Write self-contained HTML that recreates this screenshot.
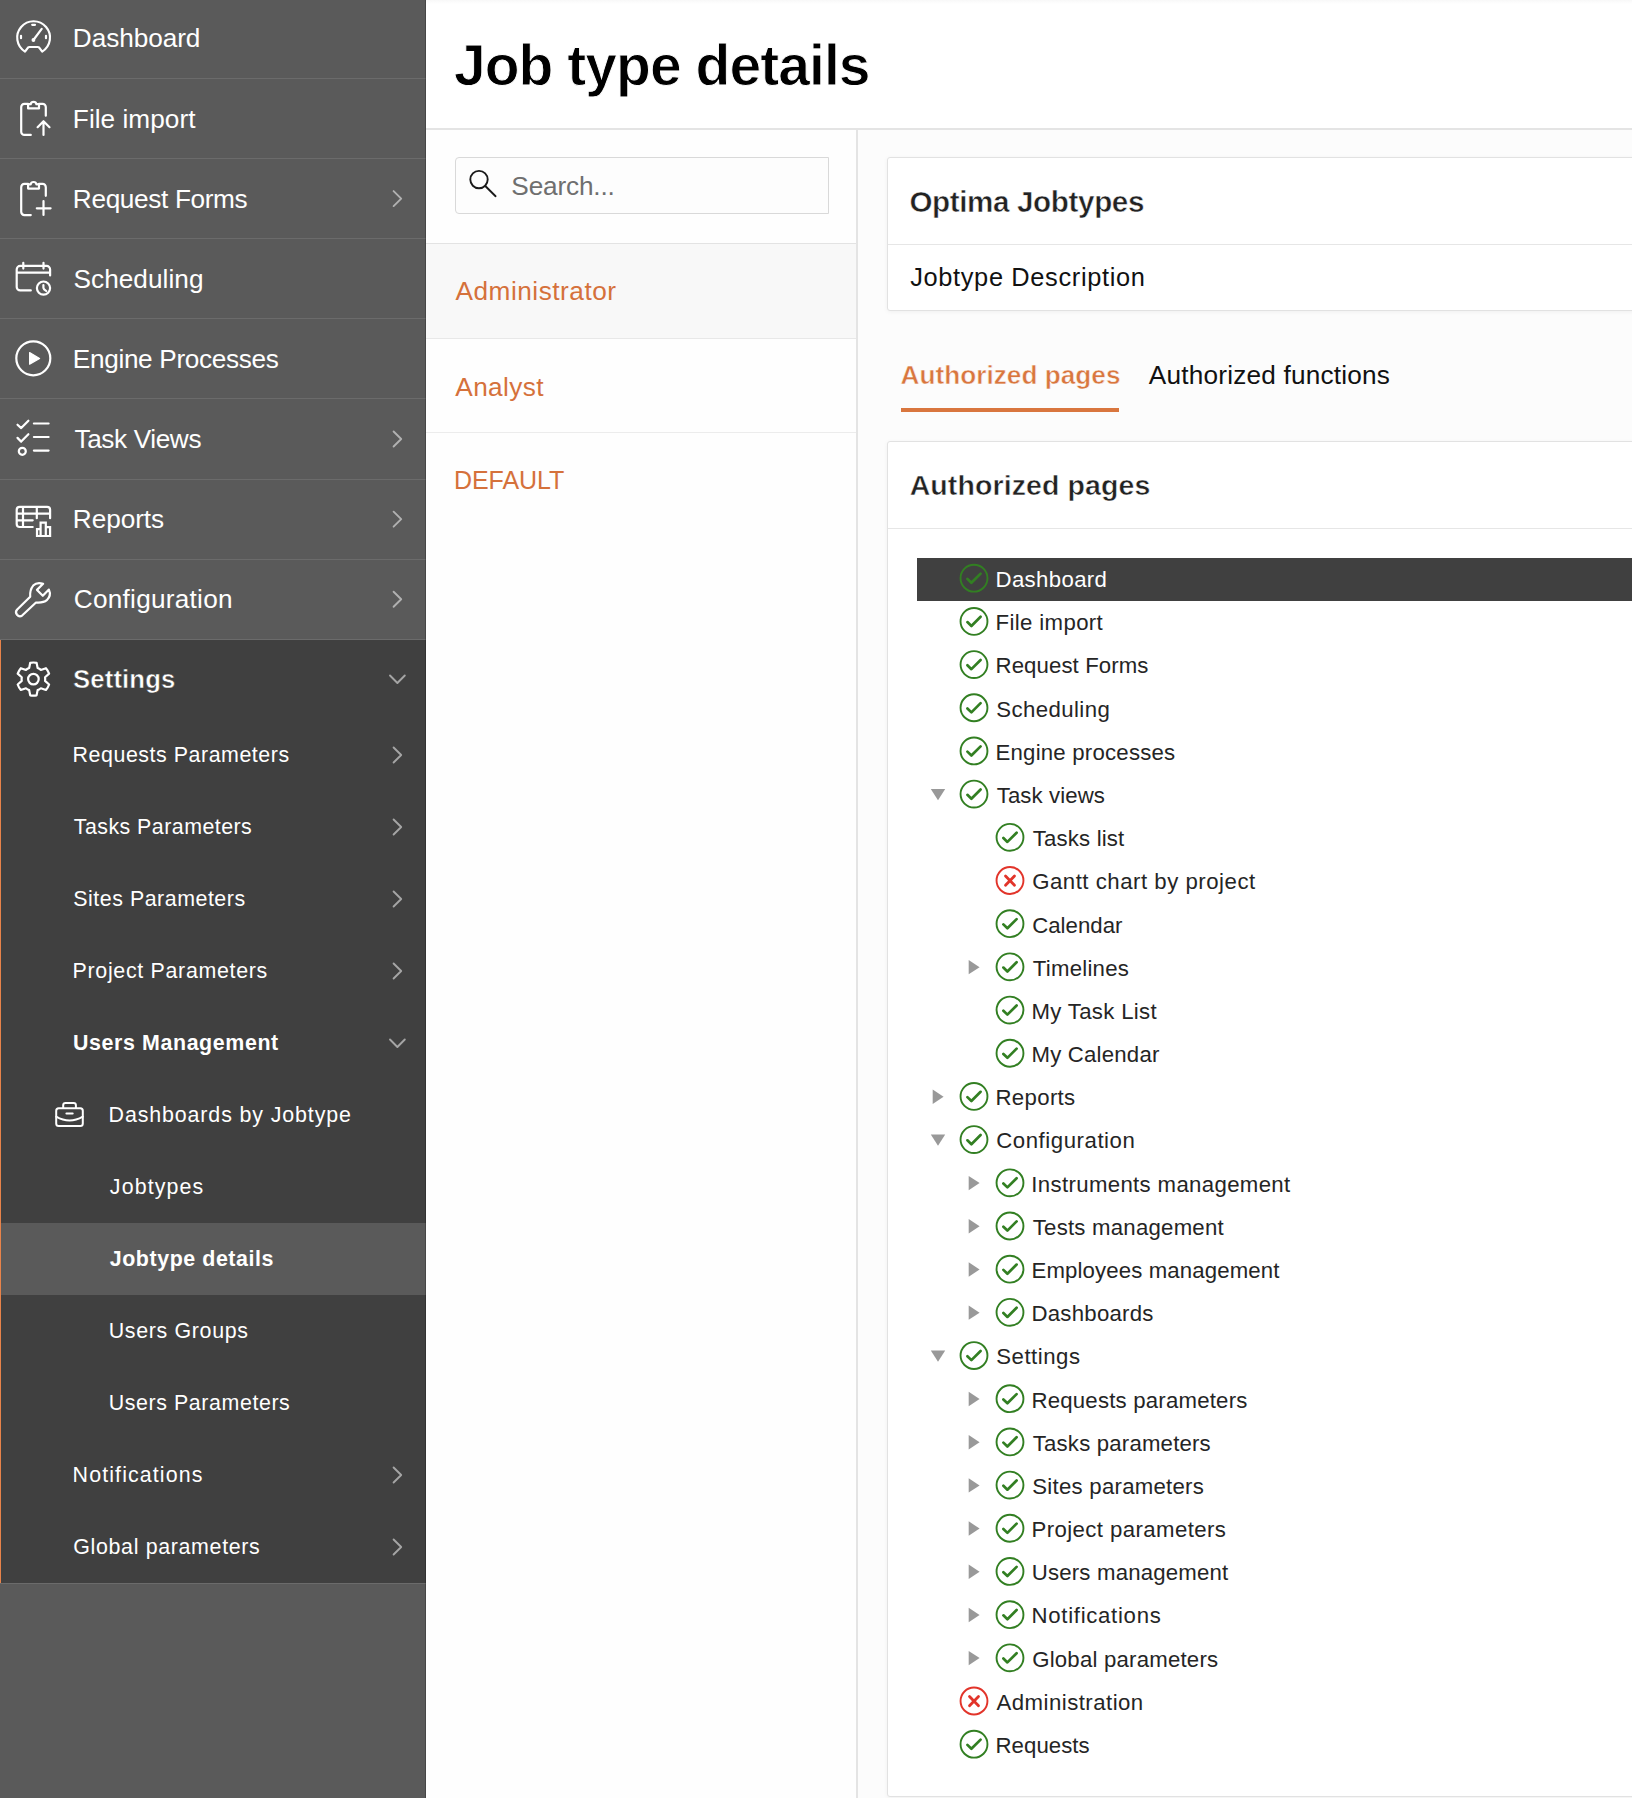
<!DOCTYPE html>
<html><head><meta charset="utf-8"><style>
html,body{margin:0;padding:0}
body{width:1632px;height:1798px;overflow:hidden;position:relative;background:#fcfcfc;font-family:"Liberation Sans",sans-serif}
.abs{position:absolute;box-sizing:border-box}
.t{position:absolute;white-space:nowrap}
</style></head><body>
<div class="abs" style="left:0;top:0;width:426px;height:1798px;background:#5a5a5a"></div>
<div class="abs" style="left:0;top:78px;width:426px;height:1px;background:#6b6b6b"></div>
<div class="abs" style="left:0;top:158px;width:426px;height:1px;background:#6b6b6b"></div>
<div class="abs" style="left:0;top:238px;width:426px;height:1px;background:#6b6b6b"></div>
<div class="abs" style="left:0;top:318px;width:426px;height:1px;background:#6b6b6b"></div>
<div class="abs" style="left:0;top:398px;width:426px;height:1px;background:#6b6b6b"></div>
<div class="abs" style="left:0;top:479px;width:426px;height:1px;background:#6b6b6b"></div>
<div class="abs" style="left:0;top:559px;width:426px;height:1px;background:#6b6b6b"></div>
<div class="abs" style="left:0;top:639px;width:426px;height:1px;background:#6b6b6b"></div>
<div class="abs" style="left:0;top:640px;width:426px;height:943px;background:#404040"></div>
<div class="abs" style="left:0;top:1223px;width:426px;height:72px;background:#5a5a5a"></div>
<div class="abs" style="left:0;top:640px;width:1.3px;height:943px;background:#e8834a"></div>
<div class="abs" style="left:0;top:1583px;width:426px;height:1px;background:#6b6b6b"></div>
<div class="abs" style="left:425px;top:0;width:1px;height:1798px;background:rgba(0,0,0,0.22)"></div>
<svg class="abs" style="left:0;top:0" width="426" height="1798" viewBox="0 0 426 1798"><g fill="none" stroke="#fff" stroke-width="2.2" stroke-linecap="round" stroke-linejoin="round"><path d="M25,51.6 A16.4,16.4 0 1 1 42.2,51.6 L39.2,47.6 Q38.6,47 37.8,47 H29.4 Q28.6,47 28,47.6 Z" /><path d="M32.2,24.8 H35 M21,35.8 V38.2 M46,35.8 V38.2 M33.4,40 L41.7,28.9" /><circle cx="33.4" cy="40" r="1.9" fill="#fff" stroke="none"/><path d="M30.8,134.9 H24.4 A3.2,3.2 0 0 1 21.2,131.7 V107 A3.2,3.2 0 0 1 24.4,103.8 H28.1" /><path d="M39,103.8 H42.6 A3.2,3.2 0 0 1 45.8,107 V115.7" /><path d="M28.1,108.4 H39 V104.2 H36.4 A2.9,2.9 0 0 0 30.7,104.2 H28.1 Z" /><path d="M43.5,135 V121.3 M37.6,127.2 L43.5,121.2 L49.5,127.2" /><path d="M30.8,215.04000000000002 H24.4 A3.2,3.2 0 0 1 21.2,211.83999999999997 V187.14 A3.2,3.2 0 0 1 24.4,183.94 H28.1" /><path d="M39,183.94 H42.6 A3.2,3.2 0 0 1 45.8,187.14 V195.84" /><path d="M28.1,188.54000000000002 H39 V184.34 H36.4 A2.9,2.9 0 0 0 30.7,184.34 H28.1 Z" /><path d="M43.5,201 V215 M36.8,208.3 H50.6" /><path d="M30.8,290.4 H20.2 A3.5,3.5 0 0 1 16.7,286.9 V269.4 A3.5,3.5 0 0 1 20.2,265.9 H46.6 A3.5,3.5 0 0 1 50.1,269.4 V275.4 M16.7,272.7 H50.1 M23.3,262.8 V268.6 M43.5,262.8 V268.6" /><circle cx="43.5" cy="288.1" r="6.6"/><path d="M43.4,285 V287.6 Q43.4,288.6 44.2,289.4 L46.2,291" /><circle cx="33.3" cy="358.3" r="17"/><path d="M29.6,352.6 L39.6,358.4 L29.6,364.2 Z" fill="#fff" stroke-width="1.2"/><path d="M17.5,424.7 L21.2,428.1 L28.4,420.7 M17.5,437.9 L21.2,441.6 L28.4,434.2 M33.9,423.5 H48.6 M33.9,437 H48.6 M33.9,450.6 H48.6" /><circle cx="22.3" cy="451.3" r="3.5"/><path d="M32.7,527 H19.7 A3,3 0 0 1 16.7,524 V509.9 A3,3 0 0 1 19.7,506.9 H47.1 A3,3 0 0 1 50.1,509.9 V518.2 M16.7,513.6 H50.1 M16.7,520.3 H32.7 M23,506.9 V527 M36.8,506.9 V518.2" /><path d="M37,536 V529.2 H40.6 V522.6 H45.8 V527.1 H50.1 V536 Z M40.6,529.2 V536 M45.8,527.1 V536" stroke-linecap="butt" stroke-linejoin="miter"/><path d="M30.2,596.7 Q29.6,590 33.2,585.6 Q37,581.6 43.1,583.8 L37,589.9 L42.8,595.8 L48.9,589.6 Q51.6,595.6 46.8,600.2 Q43.6,603 36,602.5 L22.4,615.3 Q19.4,617.6 17,614.8 Q14.8,612 17.2,609.5 Z" /><path d="M45.05,677.25 L49.10,673.70 A16.60,16.60 0 0 0 45.93,668.21 L40.83,669.93 A11.80,11.80 0 0 0 37.63,668.08 L36.57,662.80 A16.60,16.60 0 0 0 30.23,662.80 L29.17,668.08 A11.80,11.80 0 0 0 25.97,669.93 L20.87,668.21 A16.60,16.60 0 0 0 17.70,673.70 L21.75,677.25 A11.80,11.80 0 0 0 21.75,680.95 L17.70,684.50 A16.60,16.60 0 0 0 20.87,689.99 L25.97,688.27 A11.80,11.80 0 0 0 29.17,690.12 L30.23,695.40 A16.60,16.60 0 0 0 36.57,695.40 L37.63,690.12 A11.80,11.80 0 0 0 40.83,688.27 L45.93,689.99 A16.60,16.60 0 0 0 49.10,684.50 L45.05,680.95 A11.80,11.80 0 0 0 45.05,677.25 Z" /><circle cx="33.4" cy="679.1" r="5.3"/><path d="M58.7,1108.2 H80.3 A2.5,2.5 0 0 1 82.8,1110.7 V1123.5 A2.5,2.5 0 0 1 80.3,1126 H58.7 A2.5,2.5 0 0 1 56.2,1123.5 V1110.7 A2.5,2.5 0 0 1 58.7,1108.2 Z" stroke-width="2"/><path d="M63.2,1108 V1105 A2.2,2.2 0 0 1 65.4,1102.9 H73.7 A2.2,2.2 0 0 1 75.9,1105 V1108 M56.2,1116.7 Q69.5,1124.5 82.8,1116.7 M66.4,1113.4 H72.7" stroke-width="2"/><path d="M393.6,191.08 L401.2,198.58 L393.6,206.08" stroke="rgba(255,255,255,0.53)" stroke-width="1.9"/><path d="M393.6,431.50 L401.2,439.00 L393.6,446.50" stroke="rgba(255,255,255,0.53)" stroke-width="1.9"/><path d="M393.6,511.64 L401.2,519.14 L393.6,526.64" stroke="rgba(255,255,255,0.53)" stroke-width="1.9"/><path d="M393.6,591.78 L401.2,599.28 L393.6,606.78" stroke="rgba(255,255,255,0.53)" stroke-width="1.9"/><path d="M393.6,747.50 L401.2,755.00 L393.6,762.50" stroke="rgba(255,255,255,0.53)" stroke-width="1.9"/><path d="M393.6,819.50 L401.2,827.00 L393.6,834.50" stroke="rgba(255,255,255,0.53)" stroke-width="1.9"/><path d="M393.6,891.50 L401.2,899.00 L393.6,906.50" stroke="rgba(255,255,255,0.53)" stroke-width="1.9"/><path d="M393.6,963.50 L401.2,971.00 L393.6,978.50" stroke="rgba(255,255,255,0.53)" stroke-width="1.9"/><path d="M393.6,1467.50 L401.2,1475.00 L393.6,1482.50" stroke="rgba(255,255,255,0.53)" stroke-width="1.9"/><path d="M393.6,1539.50 L401.2,1547.00 L393.6,1554.50" stroke="rgba(255,255,255,0.53)" stroke-width="1.9"/><path d="M390,675.50 L397.4,683.00 L404.8,675.50" stroke="rgba(255,255,255,0.53)" stroke-width="1.9"/><path d="M390,1039.50 L397.4,1047.00 L404.8,1039.50" stroke="rgba(255,255,255,0.53)" stroke-width="1.9"/></g></svg>
<div class="abs" style="left:426px;top:0;width:1206px;height:128px;background:#fff"></div>
<div class="abs" style="left:426px;top:0;width:1206px;height:4px;background:linear-gradient(#f8f8f8,#fff)"></div>
<div class="abs" style="left:426px;top:128px;width:1206px;height:2px;background:#e4e4e4"></div>
<div class="abs" style="left:426px;top:130px;width:430px;height:1668px;background:#fefefe"></div>
<div class="abs" style="left:856px;top:128px;width:2px;height:1670px;background:#e4e4e4"></div>
<div class="abs" style="left:455px;top:157px;width:374px;height:56.5px;border:1px solid #d9d9d9;border-radius:4px 0 0 4px;background:#fdfdfd"></div>
<div class="abs" style="left:426px;top:243px;width:430px;height:1px;background:#e3e3e3"></div>
<div class="abs" style="left:426px;top:244px;width:430px;height:94px;background:#f8f8f8"></div>
<div class="abs" style="left:426px;top:338px;width:430px;height:1px;background:#e8e8e8"></div>
<div class="abs" style="left:426px;top:432px;width:430px;height:1px;background:#ececec"></div>
<div class="abs" style="left:858px;top:130px;width:774px;height:1668px;background:#fcfcfc"></div>
<div class="abs" style="left:887px;top:157px;width:760px;height:154px;border:1px solid #e2e2e2;border-radius:3px;background:#fff;box-shadow:0 1px 4px rgba(0,0,0,0.05)"></div>
<div class="abs" style="left:888px;top:244px;width:744px;height:1px;background:#e6e6e6"></div>
<div class="abs" style="left:901px;top:408px;width:218px;height:4px;background:#d9763e"></div>
<div class="abs" style="left:887px;top:441px;width:760px;height:1356px;border:1px solid #e2e2e2;border-radius:3px;background:#fff;box-shadow:0 1px 4px rgba(0,0,0,0.05)"></div>
<div class="abs" style="left:888px;top:528px;width:744px;height:1px;background:#e6e6e6"></div>
<div class="abs" style="left:917px;top:558px;width:715px;height:43px;background:#404040"></div>
<svg class="abs" style="left:0;top:0" width="1632" height="1798" viewBox="0 0 1632 1798"><g><circle cx="974.00" cy="578.20" r="13.45" fill="none" stroke="#327f22" stroke-width="1.9"/><path d="M967.40,578.90 L971.40,582.80 L980.60,573.60" fill="none" stroke="#327f22" stroke-width="2.7" stroke-linecap="round" stroke-linejoin="round"/><circle cx="974.00" cy="621.38" r="13.45" fill="none" stroke="#327f22" stroke-width="1.9"/><path d="M967.40,622.08 L971.40,625.98 L980.60,616.78" fill="none" stroke="#327f22" stroke-width="2.7" stroke-linecap="round" stroke-linejoin="round"/><circle cx="974.00" cy="664.57" r="13.45" fill="none" stroke="#327f22" stroke-width="1.9"/><path d="M967.40,665.27 L971.40,669.17 L980.60,659.97" fill="none" stroke="#327f22" stroke-width="2.7" stroke-linecap="round" stroke-linejoin="round"/><circle cx="974.00" cy="707.76" r="13.45" fill="none" stroke="#327f22" stroke-width="1.9"/><path d="M967.40,708.46 L971.40,712.36 L980.60,703.16" fill="none" stroke="#327f22" stroke-width="2.7" stroke-linecap="round" stroke-linejoin="round"/><circle cx="974.00" cy="750.94" r="13.45" fill="none" stroke="#327f22" stroke-width="1.9"/><path d="M967.40,751.64 L971.40,755.54 L980.60,746.34" fill="none" stroke="#327f22" stroke-width="2.7" stroke-linecap="round" stroke-linejoin="round"/><circle cx="974.00" cy="794.12" r="13.45" fill="none" stroke="#327f22" stroke-width="1.9"/><path d="M967.40,794.82 L971.40,798.72 L980.60,789.52" fill="none" stroke="#327f22" stroke-width="2.7" stroke-linecap="round" stroke-linejoin="round"/><path d="M930.80,789.02 L945.20,789.02 L938.00,800.22 Z" fill="#999"/><circle cx="1010.00" cy="837.31" r="13.45" fill="none" stroke="#327f22" stroke-width="1.9"/><path d="M1003.40,838.01 L1007.40,841.91 L1016.60,832.71" fill="none" stroke="#327f22" stroke-width="2.7" stroke-linecap="round" stroke-linejoin="round"/><circle cx="1010.00" cy="880.50" r="13.45" fill="none" stroke="#e2342a" stroke-width="1.9"/><path d="M1005.50,876.00 L1014.50,885.20 M1014.50,876.00 L1005.50,885.20" fill="none" stroke="#e2342a" stroke-width="2.8" stroke-linecap="round"/><circle cx="1010.00" cy="923.68" r="13.45" fill="none" stroke="#327f22" stroke-width="1.9"/><path d="M1003.40,924.38 L1007.40,928.28 L1016.60,919.08" fill="none" stroke="#327f22" stroke-width="2.7" stroke-linecap="round" stroke-linejoin="round"/><circle cx="1010.00" cy="966.87" r="13.45" fill="none" stroke="#327f22" stroke-width="1.9"/><path d="M1003.40,967.56 L1007.40,971.46 L1016.60,962.26" fill="none" stroke="#327f22" stroke-width="2.7" stroke-linecap="round" stroke-linejoin="round"/><path d="M968.70,959.96 L979.60,967.16 L968.70,974.37 Z" fill="#999"/><circle cx="1010.00" cy="1010.05" r="13.45" fill="none" stroke="#327f22" stroke-width="1.9"/><path d="M1003.40,1010.75 L1007.40,1014.65 L1016.60,1005.45" fill="none" stroke="#327f22" stroke-width="2.7" stroke-linecap="round" stroke-linejoin="round"/><circle cx="1010.00" cy="1053.24" r="13.45" fill="none" stroke="#327f22" stroke-width="1.9"/><path d="M1003.40,1053.94 L1007.40,1057.84 L1016.60,1048.63" fill="none" stroke="#327f22" stroke-width="2.7" stroke-linecap="round" stroke-linejoin="round"/><circle cx="974.00" cy="1096.42" r="13.45" fill="none" stroke="#327f22" stroke-width="1.9"/><path d="M967.40,1097.12 L971.40,1101.02 L980.60,1091.82" fill="none" stroke="#327f22" stroke-width="2.7" stroke-linecap="round" stroke-linejoin="round"/><path d="M932.70,1089.52 L943.60,1096.72 L932.70,1103.92 Z" fill="#999"/><circle cx="974.00" cy="1139.61" r="13.45" fill="none" stroke="#327f22" stroke-width="1.9"/><path d="M967.40,1140.31 L971.40,1144.20 L980.60,1135.00" fill="none" stroke="#327f22" stroke-width="2.7" stroke-linecap="round" stroke-linejoin="round"/><path d="M930.80,1134.50 L945.20,1134.50 L938.00,1145.70 Z" fill="#999"/><circle cx="1010.00" cy="1182.79" r="13.45" fill="none" stroke="#327f22" stroke-width="1.9"/><path d="M1003.40,1183.49 L1007.40,1187.39 L1016.60,1178.19" fill="none" stroke="#327f22" stroke-width="2.7" stroke-linecap="round" stroke-linejoin="round"/><path d="M968.70,1175.89 L979.60,1183.09 L968.70,1190.29 Z" fill="#999"/><circle cx="1010.00" cy="1225.98" r="13.45" fill="none" stroke="#327f22" stroke-width="1.9"/><path d="M1003.40,1226.68 L1007.40,1230.58 L1016.60,1221.38" fill="none" stroke="#327f22" stroke-width="2.7" stroke-linecap="round" stroke-linejoin="round"/><path d="M968.70,1219.08 L979.60,1226.28 L968.70,1233.48 Z" fill="#999"/><circle cx="1010.00" cy="1269.16" r="13.45" fill="none" stroke="#327f22" stroke-width="1.9"/><path d="M1003.40,1269.86 L1007.40,1273.76 L1016.60,1264.56" fill="none" stroke="#327f22" stroke-width="2.7" stroke-linecap="round" stroke-linejoin="round"/><path d="M968.70,1262.26 L979.60,1269.46 L968.70,1276.66 Z" fill="#999"/><circle cx="1010.00" cy="1312.35" r="13.45" fill="none" stroke="#327f22" stroke-width="1.9"/><path d="M1003.40,1313.05 L1007.40,1316.94 L1016.60,1307.74" fill="none" stroke="#327f22" stroke-width="2.7" stroke-linecap="round" stroke-linejoin="round"/><path d="M968.70,1305.44 L979.60,1312.64 L968.70,1319.85 Z" fill="#999"/><circle cx="974.00" cy="1355.53" r="13.45" fill="none" stroke="#327f22" stroke-width="1.9"/><path d="M967.40,1356.23 L971.40,1360.13 L980.60,1350.93" fill="none" stroke="#327f22" stroke-width="2.7" stroke-linecap="round" stroke-linejoin="round"/><path d="M930.80,1350.43 L945.20,1350.43 L938.00,1361.63 Z" fill="#999"/><circle cx="1010.00" cy="1398.72" r="13.45" fill="none" stroke="#327f22" stroke-width="1.9"/><path d="M1003.40,1399.42 L1007.40,1403.32 L1016.60,1394.12" fill="none" stroke="#327f22" stroke-width="2.7" stroke-linecap="round" stroke-linejoin="round"/><path d="M968.70,1391.82 L979.60,1399.02 L968.70,1406.22 Z" fill="#999"/><circle cx="1010.00" cy="1441.90" r="13.45" fill="none" stroke="#327f22" stroke-width="1.9"/><path d="M1003.40,1442.60 L1007.40,1446.50 L1016.60,1437.30" fill="none" stroke="#327f22" stroke-width="2.7" stroke-linecap="round" stroke-linejoin="round"/><path d="M968.70,1435.00 L979.60,1442.20 L968.70,1449.40 Z" fill="#999"/><circle cx="1010.00" cy="1485.09" r="13.45" fill="none" stroke="#327f22" stroke-width="1.9"/><path d="M1003.40,1485.79 L1007.40,1489.68 L1016.60,1480.48" fill="none" stroke="#327f22" stroke-width="2.7" stroke-linecap="round" stroke-linejoin="round"/><path d="M968.70,1478.18 L979.60,1485.38 L968.70,1492.59 Z" fill="#999"/><circle cx="1010.00" cy="1528.27" r="13.45" fill="none" stroke="#327f22" stroke-width="1.9"/><path d="M1003.40,1528.97 L1007.40,1532.87 L1016.60,1523.67" fill="none" stroke="#327f22" stroke-width="2.7" stroke-linecap="round" stroke-linejoin="round"/><path d="M968.70,1521.37 L979.60,1528.57 L968.70,1535.77 Z" fill="#999"/><circle cx="1010.00" cy="1571.46" r="13.45" fill="none" stroke="#327f22" stroke-width="1.9"/><path d="M1003.40,1572.16 L1007.40,1576.06 L1016.60,1566.86" fill="none" stroke="#327f22" stroke-width="2.7" stroke-linecap="round" stroke-linejoin="round"/><path d="M968.70,1564.56 L979.60,1571.76 L968.70,1578.96 Z" fill="#999"/><circle cx="1010.00" cy="1614.64" r="13.45" fill="none" stroke="#327f22" stroke-width="1.9"/><path d="M1003.40,1615.34 L1007.40,1619.24 L1016.60,1610.04" fill="none" stroke="#327f22" stroke-width="2.7" stroke-linecap="round" stroke-linejoin="round"/><path d="M968.70,1607.74 L979.60,1614.94 L968.70,1622.14 Z" fill="#999"/><circle cx="1010.00" cy="1657.83" r="13.45" fill="none" stroke="#327f22" stroke-width="1.9"/><path d="M1003.40,1658.53 L1007.40,1662.42 L1016.60,1653.22" fill="none" stroke="#327f22" stroke-width="2.7" stroke-linecap="round" stroke-linejoin="round"/><path d="M968.70,1650.92 L979.60,1658.12 L968.70,1665.33 Z" fill="#999"/><circle cx="974.00" cy="1701.01" r="13.45" fill="none" stroke="#e2342a" stroke-width="1.9"/><path d="M969.50,1696.51 L978.50,1705.71 M978.50,1696.51 L969.50,1705.71" fill="none" stroke="#e2342a" stroke-width="2.8" stroke-linecap="round"/><circle cx="974.00" cy="1744.20" r="13.45" fill="none" stroke="#327f22" stroke-width="1.9"/><path d="M967.40,1744.90 L971.40,1748.80 L980.60,1739.60" fill="none" stroke="#327f22" stroke-width="2.7" stroke-linecap="round" stroke-linejoin="round"/></g></svg>
<svg class="abs" style="left:0;top:0" width="1632" height="300" viewBox="0 0 1632 300"><g fill="none" stroke="#1a1a1a" stroke-width="1.9" stroke-linecap="round"><circle cx="479" cy="179.6" r="8.7"/><path d="M485.3,186 L495.6,196.2"/></g></svg>
<div class="t" style="left:72.87px;top:25.40px;font-size:26.20px;line-height:26.20px;letter-spacing:-0.079px;color:#fff;">Dashboard</div>
<div class="t" style="left:72.87px;top:105.54px;font-size:26.20px;line-height:26.20px;letter-spacing:0.035px;color:#fff;">File import</div>
<div class="t" style="left:72.87px;top:185.68px;font-size:26.20px;line-height:26.20px;letter-spacing:-0.349px;color:#fff;">Request Forms</div>
<div class="t" style="left:73.50px;top:265.82px;font-size:26.20px;line-height:26.20px;letter-spacing:0.044px;color:#fff;">Scheduling</div>
<div class="t" style="left:72.87px;top:345.96px;font-size:26.20px;line-height:26.20px;letter-spacing:-0.343px;color:#fff;">Engine Processes</div>
<div class="t" style="left:74.47px;top:426.10px;font-size:26.20px;line-height:26.20px;letter-spacing:-0.387px;color:#fff;">Task Views</div>
<div class="t" style="left:72.87px;top:506.24px;font-size:26.20px;line-height:26.20px;letter-spacing:-0.069px;color:#fff;">Reports</div>
<div class="t" style="left:73.76px;top:586.38px;font-size:26.20px;line-height:26.20px;letter-spacing:0.250px;color:#fff;">Configuration</div>
<div class="t" style="left:72.99px;top:666.65px;font-size:25.70px;line-height:25.70px;letter-spacing:0.140px;font-weight:700;color:#fff;-webkit-text-stroke:0.5px #404040;">Settings</div>
<div class="t" style="left:72.60px;top:745.40px;font-size:21.40px;line-height:21.40px;letter-spacing:0.538px;color:#fff;">Requests Parameters</div>
<div class="t" style="left:73.75px;top:817.40px;font-size:21.40px;line-height:21.40px;letter-spacing:0.458px;color:#fff;">Tasks Parameters</div>
<div class="t" style="left:73.25px;top:889.40px;font-size:21.40px;line-height:21.40px;letter-spacing:0.522px;color:#fff;">Sites Parameters</div>
<div class="t" style="left:72.60px;top:961.40px;font-size:21.40px;line-height:21.40px;letter-spacing:0.683px;color:#fff;">Project Parameters</div>
<div class="t" style="left:73.09px;top:1033.40px;font-size:21.40px;line-height:21.40px;letter-spacing:0.596px;font-weight:700;color:#fff;">Users Management</div>
<div class="t" style="left:108.60px;top:1105.40px;font-size:21.40px;line-height:21.40px;letter-spacing:0.879px;color:#fff;">Dashboards by Jobtype</div>
<div class="t" style="left:109.85px;top:1177.40px;font-size:21.40px;line-height:21.40px;letter-spacing:1.103px;color:#fff;">Jobtypes</div>
<div class="t" style="left:109.78px;top:1249.40px;font-size:21.40px;line-height:21.40px;letter-spacing:0.567px;font-weight:700;color:#fff;">Jobtype details</div>
<div class="t" style="left:108.76px;top:1321.40px;font-size:21.40px;line-height:21.40px;letter-spacing:0.663px;color:#fff;">Users Groups</div>
<div class="t" style="left:108.76px;top:1393.40px;font-size:21.40px;line-height:21.40px;letter-spacing:0.578px;color:#fff;">Users Parameters</div>
<div class="t" style="left:72.60px;top:1465.40px;font-size:21.40px;line-height:21.40px;letter-spacing:1.112px;color:#fff;">Notifications</div>
<div class="t" style="left:73.31px;top:1537.40px;font-size:21.40px;line-height:21.40px;letter-spacing:0.658px;color:#fff;">Global parameters</div>
<div class="t" style="left:453.92px;top:36.80px;font-size:57.00px;line-height:57.00px;letter-spacing:-0.947px;font-weight:700;color:#000;-webkit-text-stroke:0.9px #fff;">Job type details</div>
<div class="t" style="left:511.34px;top:172.50px;font-size:26.20px;line-height:26.20px;letter-spacing:-0.165px;color:#6f6f6f;">Search...</div>
<div class="t" style="left:455.45px;top:278.20px;font-size:26.20px;line-height:26.20px;letter-spacing:0.533px;color:#d5713b;">Administrator</div>
<div class="t" style="left:455.34px;top:373.60px;font-size:26.20px;line-height:26.20px;letter-spacing:0.374px;color:#d5713b;">Analyst</div>
<div class="t" style="left:454.09px;top:468.20px;font-size:25.00px;line-height:25.00px;letter-spacing:-0.095px;color:#d5713b;">DEFAULT</div>
<div class="t" style="left:909.38px;top:186.80px;font-size:29.60px;line-height:29.60px;letter-spacing:-0.360px;font-weight:700;color:#222;-webkit-text-stroke:0.5px #fff;">Optima Jobtypes</div>
<div class="t" style="left:910.18px;top:265.40px;font-size:25.40px;line-height:25.40px;letter-spacing:0.651px;color:#111;">Jobtype Description</div>
<div class="t" style="left:900.58px;top:362.15px;font-size:26.20px;line-height:26.20px;letter-spacing:0.012px;font-weight:700;color:#d9763e;-webkit-text-stroke:0.5px #fcfcfc;">Authorized pages</div>
<div class="t" style="left:1148.86px;top:362.15px;font-size:26.20px;line-height:26.20px;letter-spacing:0.199px;color:#111;">Authorized functions</div>
<div class="t" style="left:909.65px;top:470.95px;font-size:28.50px;line-height:28.50px;letter-spacing:0.103px;font-weight:700;color:#222;-webkit-text-stroke:0.5px #fff;">Authorized pages</div>
<div class="t" style="left:995.50px;top:569.05px;font-size:22.20px;line-height:22.20px;letter-spacing:0.361px;color:#fff;">Dashboard</div>
<div class="t" style="left:995.51px;top:612.23px;font-size:22.20px;line-height:22.20px;letter-spacing:0.371px;color:#252525;">File import</div>
<div class="t" style="left:995.51px;top:655.42px;font-size:22.20px;line-height:22.20px;letter-spacing:0.107px;color:#252525;">Request Forms</div>
<div class="t" style="left:996.23px;top:698.61px;font-size:22.20px;line-height:22.20px;letter-spacing:0.416px;color:#252525;">Scheduling</div>
<div class="t" style="left:995.51px;top:741.79px;font-size:22.20px;line-height:22.20px;letter-spacing:0.222px;color:#252525;">Engine processes</div>
<div class="t" style="left:996.75px;top:784.97px;font-size:22.20px;line-height:22.20px;letter-spacing:0.096px;color:#252525;">Task views</div>
<div class="t" style="left:1032.75px;top:828.16px;font-size:22.20px;line-height:22.20px;letter-spacing:0.170px;color:#252525;">Tasks list</div>
<div class="t" style="left:1032.16px;top:871.35px;font-size:22.20px;line-height:22.20px;letter-spacing:0.520px;color:#252525;">Gantt chart by project</div>
<div class="t" style="left:1032.20px;top:914.53px;font-size:22.20px;line-height:22.20px;letter-spacing:0.031px;color:#252525;">Calendar</div>
<div class="t" style="left:1032.75px;top:957.71px;font-size:22.20px;line-height:22.20px;letter-spacing:0.249px;color:#252525;">Timelines</div>
<div class="t" style="left:1031.51px;top:1000.90px;font-size:22.20px;line-height:22.20px;letter-spacing:0.320px;color:#252525;">My Task List</div>
<div class="t" style="left:1031.51px;top:1044.09px;font-size:22.20px;line-height:22.20px;letter-spacing:0.203px;color:#252525;">My Calendar</div>
<div class="t" style="left:995.51px;top:1087.27px;font-size:22.20px;line-height:22.20px;letter-spacing:0.338px;color:#252525;">Reports</div>
<div class="t" style="left:996.20px;top:1130.46px;font-size:22.20px;line-height:22.20px;letter-spacing:0.555px;color:#252525;">Configuration</div>
<div class="t" style="left:1031.30px;top:1173.64px;font-size:22.20px;line-height:22.20px;letter-spacing:0.350px;color:#252525;">Instruments management</div>
<div class="t" style="left:1032.75px;top:1216.83px;font-size:22.20px;line-height:22.20px;letter-spacing:0.231px;color:#252525;">Tests management</div>
<div class="t" style="left:1031.51px;top:1260.01px;font-size:22.20px;line-height:22.20px;letter-spacing:0.131px;color:#252525;">Employees management</div>
<div class="t" style="left:1031.51px;top:1303.20px;font-size:22.20px;line-height:22.20px;letter-spacing:0.254px;color:#252525;">Dashboards</div>
<div class="t" style="left:996.23px;top:1346.38px;font-size:22.20px;line-height:22.20px;letter-spacing:0.525px;color:#252525;">Settings</div>
<div class="t" style="left:1031.51px;top:1389.57px;font-size:22.20px;line-height:22.20px;letter-spacing:0.207px;color:#252525;">Requests parameters</div>
<div class="t" style="left:1032.75px;top:1432.75px;font-size:22.20px;line-height:22.20px;letter-spacing:0.190px;color:#252525;">Tasks parameters</div>
<div class="t" style="left:1032.23px;top:1475.94px;font-size:22.20px;line-height:22.20px;letter-spacing:0.261px;color:#252525;">Sites parameters</div>
<div class="t" style="left:1031.51px;top:1519.12px;font-size:22.20px;line-height:22.20px;letter-spacing:0.406px;color:#252525;">Project parameters</div>
<div class="t" style="left:1031.69px;top:1562.31px;font-size:22.20px;line-height:22.20px;letter-spacing:0.195px;color:#252525;">Users management</div>
<div class="t" style="left:1031.51px;top:1605.49px;font-size:22.20px;line-height:22.20px;letter-spacing:0.704px;color:#252525;">Notifications</div>
<div class="t" style="left:1032.16px;top:1648.68px;font-size:22.20px;line-height:22.20px;letter-spacing:0.216px;color:#252525;">Global parameters</div>
<div class="t" style="left:996.50px;top:1691.86px;font-size:22.20px;line-height:22.20px;letter-spacing:0.471px;color:#252525;">Administration</div>
<div class="t" style="left:995.51px;top:1735.05px;font-size:22.20px;line-height:22.20px;letter-spacing:0.064px;color:#252525;">Requests</div>
</body></html>
